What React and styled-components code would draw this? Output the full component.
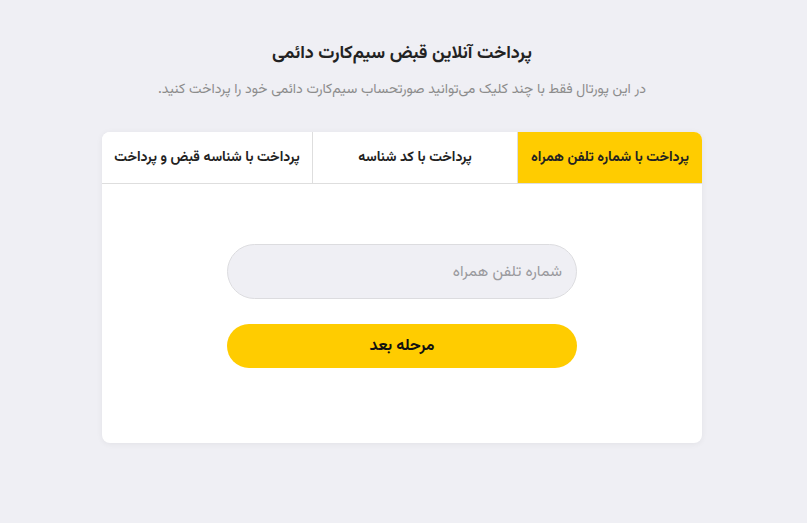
import React, { useState } from "react";
import styled, { createGlobalStyle } from "styled-components";

const GlobalStyle = createGlobalStyle`
    * { box-sizing: border-box; }
    body {
        margin: 0;
        background: #efeff4;
        font-family: "Vazirmatn", "Noto Sans Arabic", "DejaVu Sans", sans-serif;
        direction: rtl;
    }
`;

const Page = styled.main`
    min-height: 523px;
    display: flex;
    flex-direction: column;
    align-items: center;
    padding: 40px 3px 0 0;
`;

const Titulo = styled.h1`
    margin: 0;
    font-size: 18px;
    font-weight: 700;
    color: #222;
    line-height: 28px;
`;

const Descripcion = styled.p`
    margin: 11px 0 0;
    font-size: 14px;
    color: #8c8c8c;
    line-height: 22px;
`;

const Tarjeta = styled.section`
    margin-top: 31px;
    width: 600px;
    background: #fff;
    border-radius: 8px;
    box-shadow: 0 1px 6px rgba(0, 0, 0, 0.06);
    overflow: hidden;
`;

const Pestanas = styled.div`
    display: grid;
    grid-template-columns: 185px 205px 210px;
    border-bottom: 1px solid #dedede;
`;

const Pestana = styled.button`
    height: 51px;
    border: none;
    border-left: ${(p) => (p.$ultima ? "none" : "1px solid #dedede")};
    background: ${(p) => (p.$activa ? "#ffcc00" : "#fff")};
    font-family: inherit;
    font-size: 14px;
    font-weight: 700;
    color: #222;
    cursor: pointer;
    padding: 0;
`;

const Cuerpo = styled.div`
    display: flex;
    flex-direction: column;
    align-items: center;
    gap: 25px;
    padding: 60px 0 75px;
`;

const Campo = styled.input`
    width: 350px;
    height: 55px;
    border-radius: 28px;
    border: 1px solid #dcdcdf;
    background: #efeff4;
    padding: 0 14px;
    font-family: inherit;
    font-size: 15.5px;
    color: #333;
    outline: none;
    &::placeholder {
        color: #9a9a9e;
    }
`;

const Boton = styled.button`
    width: 350px;
    height: 44px;
    border: none;
    border-radius: 22px;
    background: #ffcc00;
    font-family: inherit;
    font-size: 16px;
    font-weight: 700;
    color: #111;
    cursor: pointer;
`;

const tabs = [
    "پرداخت با شماره تلفن همراه",
    "پرداخت با کد شناسه",
    "پرداخت با شناسه قبض و پرداخت",
];

const App = () => {
    const [activa, setActiva] = useState(0);
    return (
        <>
            <GlobalStyle />
            <Page>
                <Titulo>پرداخت آنلاین قبض سیم‌کارت دائمی</Titulo>
                <Descripcion>
                    در این پورتال فقط با چند کلیک می‌توانید صورتحساب سیم‌کارت دائمی خود را پرداخت کنید.
                </Descripcion>
                <Tarjeta>
                    <Pestanas>
                        {tabs.map((t, i) => (
                            <Pestana
                                key={t}
                                $activa={activa === i}
                                $ultima={i === tabs.length - 1}
                                onClick={() => setActiva(i)}
                            >
                                {t}
                            </Pestana>
                        ))}
                    </Pestanas>
                    <Cuerpo>
                        <Campo placeholder="شماره تلفن همراه" />
                        <Boton>مرحله بعد</Boton>
                    </Cuerpo>
                </Tarjeta>
            </Page>
        </>
    );
};

export default App;
